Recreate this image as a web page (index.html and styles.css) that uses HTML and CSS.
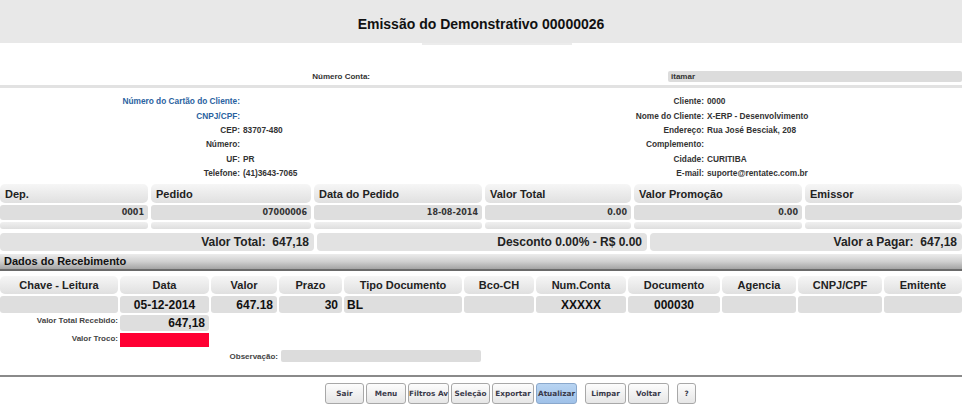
FILE: index.html
```html
<!DOCTYPE html>
<html lang="pt-BR">
<head>
    <meta charset="UTF-8">
    <title>Emissão do Demonstrativo</title>
    <link rel="stylesheet" href="styles.css">
</head>
<body>
    <div class="topbar">
        <h1>Emissão do Demonstrativo 00000026</h1>
    </div>
    <div class="topbar-tab"></div>

    <div class="conta">
        <div class="lbl">Número Conta:</div>
        <div></div>
        <div class="input">itamar</div>
    </div>
    <div class="sep"></div>

    <div class="info">
        <div class="lbl blue">Número do Cartão do Cliente:</div><div class="val"></div>
        <div class="lbl">Cliente:</div><div class="val">0000</div>

        <div class="lbl blue">CNPJ/CPF:</div><div class="val"></div>
        <div class="lbl">Nome do Cliente:</div><div class="val">X-ERP - Desenvolvimento</div>

        <div class="lbl">CEP:</div><div class="val">83707-480</div>
        <div class="lbl">Endereço:</div><div class="val">Rua José Besciak, 208</div>

        <div class="lbl">Número:</div><div class="val"></div>
        <div class="lbl">Complemento:</div><div class="val"></div>

        <div class="lbl">UF:</div><div class="val">PR</div>
        <div class="lbl">Cidade:</div><div class="val">CURITIBA</div>

        <div class="lbl">Telefone:</div><div class="val">(41)3643-7065</div>
        <div class="lbl">E-mail:</div><div class="val">suporte@rentatec.com.br</div>
    </div>

    <div class="pedidos">
        <div class="th">Dep.</div>
        <div class="th">Pedido</div>
        <div class="th">Data do Pedido</div>
        <div class="th">Valor Total</div>
        <div class="th">Valor Promoção</div>
        <div class="th">Emissor</div>

        <div class="td">0001</div>
        <div class="td">07000006</div>
        <div class="td">18-08-2014</div>
        <div class="td">0.00</div>
        <div class="td">0.00</div>
        <div class="td"></div>

        <div class="te"></div>
        <div class="te"></div>
        <div class="te"></div>
        <div class="te"></div>
        <div class="te"></div>
        <div class="te"></div>
    </div>

    <div class="totais">
        <div class="tot">Valor Total:&nbsp; 647,18</div>
        <div class="tot">Desconto 0.00% - R$ 0.00</div>
        <div class="tot">Valor a Pagar:&nbsp; 647,18</div>
    </div>

    <div class="secao">Dados do Recebimento</div>

    <div class="receb">
        <div class="th">Chave - Leitura</div>
        <div class="th">Data</div>
        <div class="th">Valor</div>
        <div class="th">Prazo</div>
        <div class="th">Tipo Documento</div>
        <div class="th">Bco-CH</div>
        <div class="th">Num.Conta</div>
        <div class="th">Documento</div>
        <div class="th">Agencia</div>
        <div class="th">CNPJ/CPF</div>
        <div class="th">Emitente</div>

        <div class="td"></div>
        <div class="td c">05-12-2014</div>
        <div class="td r">647.18</div>
        <div class="td r">30</div>
        <div class="td l">BL</div>
        <div class="td"></div>
        <div class="td c">XXXXX</div>
        <div class="td c">000030</div>
        <div class="td"></div>
        <div class="td"></div>
        <div class="td"></div>
    </div>

    <div class="pgto">
        <div class="lbl">Valor Total Recebido:</div>
        <div class="box">647,18</div>
    </div>
    <div class="pgto troco">
        <div class="lbl">Valor Troco:</div>
        <div class="box red"></div>
    </div>
    <div class="obs">
        <div class="lbl">Observação:</div>
        <div class="input"></div>
    </div>

    <div class="rodape">
        <button class="btn w39">Sair</button>
        <button class="btn w40">Menu</button>
        <button class="btn w41">Filtros Av</button>
        <button class="btn w39">Seleção</button>
        <button class="btn w42">Exportar</button>
        <button class="btn w41 ativo">Atualizar</button>
        <button class="btn w41 grupo">Limpar</button>
        <button class="btn w41">Voltar</button>
        <button class="btn w19 grupo">?</button>
    </div>
</body>
</html>
```

FILE: styles.css
```css
body {
    margin: 0;
    font-family: "Liberation Sans", Arial, sans-serif;
    color: #222;
    background: #fff;
    width: 962px;
    height: 407px;
    overflow: hidden;
}

.topbar {
    height: 43px;
    box-sizing: border-box;
    padding-top: 16px;
    background: #e8e8e8;
    display: flex;
    justify-content: center;
    align-items: flex-start;
}

.topbar h1 {
    margin: 0;
    font-size: 14px;
    line-height: 16px;
    font-weight: bold;
    color: #111;
}

.topbar-tab {
    width: 150px;
    height: 2px;
    margin-left: 422px;
    background: #ececec;
}

.lbl {
    font-size: 8px;
    font-weight: bold;
    color: #333;
    text-align: right;
}

.val {
    font-size: 8px;
    font-weight: bold;
    color: #333;
    padding-left: 3px;
}

.blue {
    color: #2a62a0;
}

.input {
    background: #dcdcdc;
    border-radius: 2px;
    font-size: 8px;
    font-weight: bold;
    color: #333;
    padding-left: 3px;
    line-height: 11px;
    height: 11px;
}

/* número conta */
.conta {
    display: grid;
    grid-template-columns: 370px 298px 1fr;
    align-items: center;
    margin-top: 26px;
}

.conta .lbl {
    line-height: 11px;
}

.sep {
    height: 3px;
    margin-top: 3px;
    background: #e2e2e2;
}

/* dados do cliente */
.info {
    display: grid;
    grid-template-columns: 240px 224px 240px 1fr;
    grid-auto-rows: 14.4px;
    align-items: center;
    padding-top: 6px;
}

.info .lbl,
.info .val {
    font-size: 8.3px;
}

/* tabela de pedidos */
.pedidos {
    display: grid;
    grid-template-columns: 148px 160px 168px 146px 168px 1fr;
    grid-template-rows: 19px 15px 7px;
    column-gap: 3px;
    row-gap: 2px;
    margin-top: 4px;
}

.th {
    background: linear-gradient(#f6f6f6, #e0e0e0);
    border-radius: 5px;
    font-size: 11px;
    font-weight: bold;
    color: #222;
    display: flex;
    align-items: center;
    padding-left: 5px;
}

.td {
    background: #dedede;
    border-radius: 3px;
    font-family: "DejaVu Sans", Verdana, sans-serif;
    font-size: 8px;
    font-weight: bold;
    color: #333;
    display: flex;
    align-items: center;
    justify-content: flex-end;
    padding-right: 4px;
}

.te {
    background: linear-gradient(#f0f0f0, #dedede);
    border-radius: 3px;
}

/* totais */
.totais {
    display: grid;
    grid-template-columns: 314px 330px 1fr;
    column-gap: 3px;
    margin-top: 4px;
}

.tot {
    height: 18px;
    background: #e2e2e2;
    border-radius: 4px;
    font-size: 12px;
    font-weight: bold;
    color: #222;
    display: flex;
    align-items: center;
    justify-content: flex-end;
    padding-right: 5px;
}

/* barra de seção */
.secao {
    margin-top: 3px;
    height: 15px;
    background: linear-gradient(#ececec, #cfcfcf 50%, #a4a4a4);
    border-bottom: 2px solid #6a6a6a;
    font-size: 11px;
    font-weight: bold;
    color: #111;
    padding-left: 4px;
    line-height: 15px;
}

/* recebimento */
.receb {
    display: grid;
    grid-template-columns: 118px 89px 66px 63px 118px 70px 90px 92px 74px 84px 1fr;
    grid-template-rows: 18px 17px;
    column-gap: 2px;
    row-gap: 2px;
    margin-top: 5px;
}

.receb .th {
    justify-content: center;
    padding-left: 0;
}

.receb .td {
    font-family: "Liberation Sans", Arial, sans-serif;
    font-size: 12px;
    color: #111;
    padding-right: 4px;
}

.receb .td.c {
    justify-content: center;
    padding-right: 0;
}

.receb .td.l {
    justify-content: flex-start;
    padding-left: 3px;
}

.pgto {
    display: grid;
    grid-template-columns: 118px 89px;
    column-gap: 2px;
    margin-top: 2px;
}

.pgto .lbl {
    color: #444;
    line-height: 12px;
}

.box {
    height: 16px;
    background: #dedede;
    border-radius: 3px;
    font-size: 12px;
    font-weight: bold;
    color: #111;
    text-align: right;
    padding-right: 4px;
    line-height: 16px;
}

.troco .box {
    height: 14px;
}

.box.red {
    background: #ff0033;
    border-radius: 0;
}

.obs {
    display: grid;
    grid-template-columns: 278px 200px;
    column-gap: 3px;
    align-items: center;
    margin-top: 3px;
}

.obs .lbl {
    color: #444;
}

.obs .input {
    height: 12px;
}

/* rodapé com botões */
.rodape {
    margin-top: 13px;
    border-top: 2px solid #8a8a8a;
    padding: 6px 0 0 325px;
    display: flex;
    gap: 2px;
}

.btn {
    height: 21px;
    padding: 0;
    background: linear-gradient(#fdfdfd, #e6e6e6);
    border: 1px solid #a8a8a8;
    border-radius: 3px;
    font-family: "DejaVu Sans", Verdana, sans-serif;
    font-size: 7.3px;
    font-weight: bold;
    color: #3a3a4a;
    white-space: nowrap;
    overflow: hidden;
}

.btn.ativo {
    background: linear-gradient(#b8d4f2, #9fc1e8);
    border-color: #8aa8cc;
}

.btn.grupo {
    margin-left: 6px;
}

.w19 { width: 19px; }
.w39 { width: 39px; }
.w40 { width: 40px; }
.w41 { width: 41px; }
.w42 { width: 42px; }
```
